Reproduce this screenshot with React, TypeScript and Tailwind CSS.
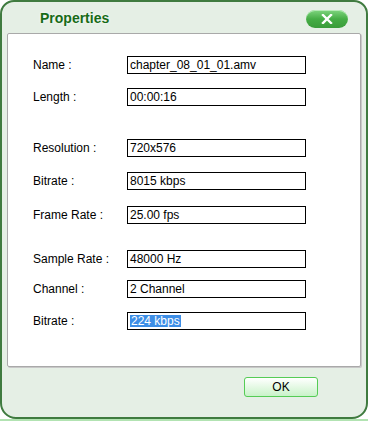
const fields = [
  { label: 'Name :', value: 'chapter_08_01_01.amv', gap: 'mt-[22px]' },
  { label: 'Length :', value: '00:00:16', gap: 'mt-[14px]' },
  { label: 'Resolution :', value: '720x576', gap: 'mt-[33px]' },
  { label: 'Bitrate :', value: '8015 kbps', gap: 'mt-[15px]' },
  { label: 'Frame Rate :', value: '25.00 fps', gap: 'mt-[16px]' },
  { label: 'Sample Rate :', value: '48000 Hz', gap: 'mt-[26px]' },
  { label: 'Channel :', value: '2 Channel', gap: 'mt-[12px]' },
  { label: 'Bitrate :', value: '224 kbps', gap: 'mt-[14px]', selected: true },
];

export default function App() {
  return (
    <div className="w-[368px] h-[421px] bg-white font-['Liberation_Sans',Arial,sans-serif] text-[12px] text-black">
      {/* Window */}
      <div className="h-[419px] bg-[#e5efe5] border-2 border-[#3f7b3f] rounded-t-[14px] rounded-b-[16px] flex flex-col">
        {/* Title bar */}
        <div className="h-[31px] flex items-start justify-between">
          <span className="ml-[38px] mt-[6px] text-[14px] font-bold text-[#176b17] [text-shadow:0_0_3px_#fff]">Properties</span>
          <button className="mt-[8px] mr-[18px] w-[42px] h-[18px] rounded-full bg-gradient-to-b from-[#7fd67f] via-[#45ad45] to-[#3a9c3a] flex items-center justify-center shadow-[inset_0_1px_0_#b6eab6]">
            <svg width="12" height="10" viewBox="0 0 12 10">
              <path d="M2 1 L10 9 M10 1 L2 9" stroke="#fff" strokeWidth="2.4" strokeLinecap="square" />
            </svg>
          </button>
        </div>

        {/* Content panel */}
        <div className="mx-[5px] h-[334px] bg-white border border-[#a9a9a9] shadow-[1px_1px_0_#c8c8c8] rounded-[2px] pl-[25px] flex flex-col">
          {fields.map((f, i) => (
            <div key={i} className={`${f.gap} flex items-center h-[18px]`}>
              <span className="w-[94px]">{f.label}</span>
              <div className="w-[179px] h-[18px] border border-black flex items-center px-[2px] leading-none">
                {f.selected ? (
                  <span className="bg-[#3d8ee6] text-white px-[1px]">{f.value}</span>
                ) : (
                  <span>{f.value}</span>
                )}
              </div>
            </div>
          ))}
        </div>

        {/* Footer */}
        <div className="flex justify-end pr-[48px] mt-[10px]">
          <button className="w-[74px] h-[20px] rounded-[3px] border border-[#55cc55] bg-gradient-to-b from-white to-[#c9f2c9] text-[12px] leading-none">
            OK
          </button>
        </div>
      </div>
      <div className="h-[2px] bg-[#b2e3b2]" />
    </div>
  );
}
